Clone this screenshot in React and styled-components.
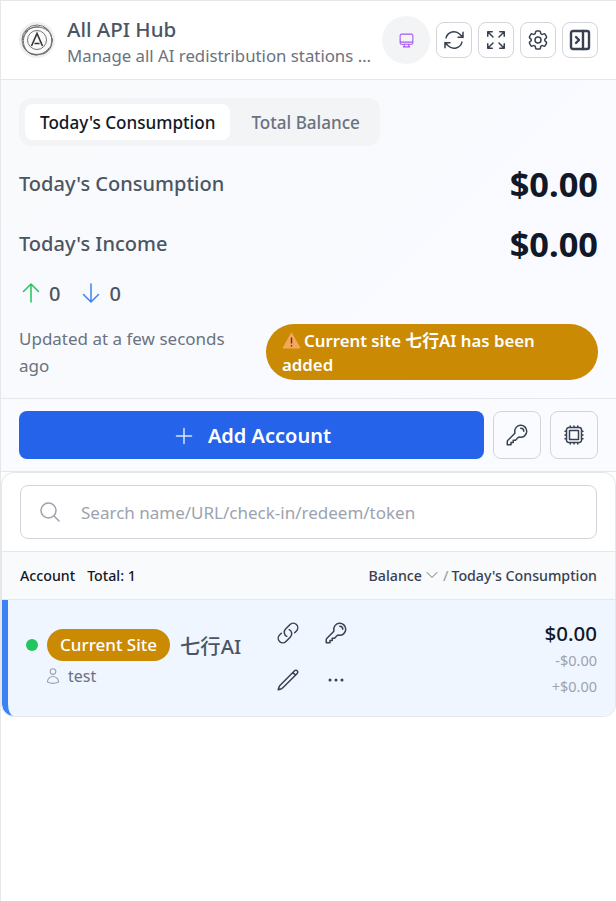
import React from 'react';
import styled, { createGlobalStyle } from 'styled-components';
import { PanelRightClose } from 'lucide-react';
import {
  HiOutlineArrowDown,
  HiOutlineArrowPath,
  HiOutlineArrowUp,
  HiOutlineArrowsPointingOut,
  HiOutlineChevronDown,
  HiOutlineCog6Tooth,
  HiOutlineComputerDesktop,
  HiOutlineCpuChip,
  HiOutlineEllipsisHorizontal,
  HiOutlineKey,
  HiOutlineLink,
  HiOutlineMagnifyingGlass,
  HiOutlinePencil,
  HiOutlinePlus,
  HiOutlineUser,
} from 'react-icons/hi2';

const GlobalStyle = createGlobalStyle`
  html, body { margin: 0; padding: 0; background: #fff; }
  body {
    font-family: "Noto Sans", "Noto Sans CJK SC", sans-serif;
    color: #374151;
  }
  * { box-sizing: border-box; }
`;

const Page = styled.div`
  position: relative;
  width: 616px;
  height: 901px;
  overflow: hidden;
  border-left: 1px solid #e5e7eb;
  border-top: 1px solid #e5e7eb;
  background: #fff;

  /* bits of the page behind the popup showing through the edge */
  &::before {
    content: "";
    position: absolute;
    left: -1px;
    top: 132px;
    width: 1px;
    height: 193px;
    background: #7b919b;
  }
  &::after {
    content: "";
    position: absolute;
    left: -1px;
    top: 767px;
    width: 1px;
    height: 19px;
    background: #9a9a9a;
  }
`;

const Header = styled.header`
  height: 79px;
  display: flex;
  align-items: center;
  padding: 0 18px;
  border-bottom: 1px solid #e5e7eb;
  background: #fff;
`;

const Logo = styled.svg`
  width: 36px;
  height: 36px;
  flex: none;
`;

const Brand = styled.div`
  margin-left: 12px;
  padding-top: 3px;
  width: 305px;
  flex: none;
  margin-right: 10px;
`;

const AppName = styled.div`
  font-size: 20.5px;
  line-height: 28px;
  font-weight: 500;
  color: #4b5563;
`;

const AppTag = styled.div`
  font-size: 16.8px;
  line-height: 26px;
  color: #6b7280;
  white-space: nowrap;
  overflow: hidden;
  text-overflow: ellipsis;
`;

const ThemeButton = styled.div`
  width: 48px;
  height: 48px;
  border-radius: 50%;
  background: #f3f4f6;
  color: #a855f7;
  display: flex;
  align-items: center;
  justify-content: center;
  flex: none;
  font-size: 17px;
`;

const HeaderTools = styled.div`
  display: flex;
  gap: 6px;
  margin-left: 6px;
`;

const ToolButton = styled.div`
  width: 36px;
  height: 36px;
  border: 1px solid #d1d5db;
  border-radius: 8px;
  background: #fff;
  color: #374151;
  display: flex;
  align-items: center;
  justify-content: center;
  font-size: 24px;
`;

const BalanceSection = styled.section`
  height: 319px;
  padding: 18px 18px 0;
  background: linear-gradient(135deg, #f8fafc 0%, #f8faff 60%, #fafbff 100%);
  border-bottom: 1px solid #e5e7eb;
`;

const Tabs = styled.div`
  display: inline-flex;
  width: 361px;
  height: 48px;
  padding: 6px;
  border-radius: 12px;
  background: #f3f4f6;
`;

const Tab = styled.div`
  height: 36px;
  padding: 1px ${p => (p.$active ? 15 : 21)}px 0;
  border-radius: 8px;
  display: flex;
  align-items: center;
  font-size: 17.1px;
  font-weight: 500;
  white-space: nowrap;
  background: ${p => (p.$active ? '#fff' : 'transparent')};
  color: ${p => (p.$active ? '#111827' : '#6b7280')};
`;

const StatRow = styled.div`
  display: flex;
  align-items: center;
  justify-content: space-between;
  height: 40px;
  margin-top: ${p => p.$top}px;
`;

const StatLabel = styled.div`
  font-size: 20px;
  font-weight: 500;
  color: #4b5563;
`;

const StatValue = styled.div`
  margin-top: 1px;
  font-size: 34.4px;
  font-weight: 700;
  color: #111827;
`;

const Flow = styled.div`
  display: flex;
  align-items: center;
  gap: 19px;
  margin-top: 16px;
  height: 28px;
`;

const FlowItem = styled.div`
  display: flex;
  align-items: center;
  gap: 6px;
  font-size: 20px;
  font-weight: 500;
  color: #4b5563;
  svg { font-size: 24px; color: ${p => p.$color}; }
`;

const StatusRow = styled.div`
  display: flex;
  align-items: center;
  justify-content: space-between;
  margin-top: 17px;
`;

const Updated = styled.div`
  width: 220px;
  font-size: 17px;
  line-height: 27px;
  color: #6b7280;
`;

const Notice = styled.div`
  width: 332px;
  height: 56px;
  padding: 5px 24px 0 16px;
  border-radius: 28px;
  background: #ca8a04;
  color: #fff;
  font-size: 16.8px;
  line-height: 24px;
  font-weight: 600;
`;

const WarnIcon = styled.svg`
  width: 19px;
  height: 17px;
  vertical-align: -2px;
  margin-right: 3px;
`;

const Actions = styled.div`
  height: 73px;
  display: flex;
  align-items: center;
  gap: 9px;
  padding: 0 18px;
  background: #fafbff;
  border-bottom: 1px solid #e5e7eb;
`;

const AddButton = styled.div`
  flex: 1;
  height: 48px;
  padding-top: 1px;
  border-radius: 8px;
  background: #2563eb;
  color: #fff;
  display: flex;
  align-items: center;
  justify-content: center;
  gap: 12px;
  font-size: 20px;
  font-weight: 600;
  svg { font-size: 24px; color: #dbe6fd; }
`;

const IconButton = styled.div`
  width: 48px;
  height: 48px;
  border: 1px solid #d1d5db;
  border-radius: 8px;
  color: #374151;
  display: flex;
  align-items: center;
  justify-content: center;
  font-size: 24px;
`;

const Card = styled.div`
  margin: 1px 0 0 1px;
  width: 613px;
  height: 243px;
  border-radius: 12px;
  background: #fff;
  box-shadow: 0 0 0 1px #e5e7eb;
  overflow: hidden;
`;

const SearchWrap = styled.div`
  height: 79px;
  padding: 12px 18px;
  border-bottom: 1px solid #e5e7eb;
`;

const SearchBox = styled.div`
  height: 54px;
  border: 1px solid #d1d5db;
  border-radius: 8px;
  display: flex;
  align-items: center;
  padding-left: 17px;
  gap: 19px;
  font-size: 17px;
  color: #9ca3af;
  svg { font-size: 24px; }
`;

const ListHead = styled.div`
  height: 48px;
  padding: 0 18px 1px;
  display: flex;
  align-items: center;
  justify-content: space-between;
  background: #f9fafb;
  border-bottom: 1px solid #e5e7eb;
  font-size: 14.2px;
  font-weight: 500;
  color: #111827;
`;

const HeadLeft = styled.div`
  display: flex;
  gap: 12px;
`;

const HeadRight = styled.div`
  display: flex;
  align-items: center;
  color: #374151;
  svg { font-size: 16px; margin: 0 3px 0 2px; color: #6b7280; }
`;

const Slash = styled.span`
  color: #9ca3af;
  margin-right: 3px;
`;

const AccountRow = styled.div`
  height: 116px;
  display: flex;
  align-items: center;
  border-left: 6px solid #3b82f6;
  border-radius: 0 0 12px 12px;
  background: #eff6ff;
  padding: 0 18px;
`;

const AccountMain = styled.div`
  width: 250px;
  flex: none;
`;

const SiteLine = styled.div`
  display: flex;
  align-items: center;
`;

const Dot = styled.span`
  width: 12px;
  height: 12px;
  border-radius: 50%;
  background: #22c55e;
  margin-right: 9px;
`;

const Badge = styled.span`
  height: 32px;
  padding: 0 13px 1px;
  border-radius: 16px;
  background: #ca8a04;
  color: #fff;
  font-size: 17px;
  font-weight: 500;
  display: flex;
  align-items: center;
`;

const SiteName = styled.span`
  margin-left: 10px;
  font-size: 20.3px;
  font-weight: 500;
  color: #4b5563;
`;

const UserLine = styled.div`
  display: flex;
  align-items: center;
  gap: 6px;
  margin: 4px 0 0 18px;
  font-size: 16px;
  color: #6b7280;
  svg { font-size: 18px; color: #9ca3af; }
`;

const RowIcons = styled.div`
  display: grid;
  grid-template-columns: 24px 24px;
  gap: 23px 24px;
  margin-top: -3px;
  font-size: 24px;
  color: #374151;
  svg { display: block; }
`;

const Amounts = styled.div`
  margin: 2px 0 0 auto;
  text-align: right;
`;

const Amount = styled.div`
  font-size: 20.5px;
  line-height: 28px;
  font-weight: 500;
  color: #111827;
`;

const SubAmount = styled.div`
  font-size: 14.5px;
  line-height: 26px;
  color: #9ca3af;
`;

function AppLogo() {
  return (
    <Logo viewBox="0 0 36 36">
      <circle cx="18" cy="18" r="18" fill="#efefed" />
      <circle cx="18" cy="18" r="15" fill="#fafafa" />
      <g fill="none" stroke="#666" strokeWidth="0.9">
        <circle cx="18" cy="18" r="15" />
        <circle cx="18" cy="18" r="9.500" />
        <path d="M6 10c6-6 16-7 23-1M3.500 18c1-8 8-14 17-13M8 29C3 23 3 14 9 9M18 33c-7 0-12-4-14-10M30 26c-4 6-12 8-19 5M33 16c1 8-3 14-9 16M24 4.500c5 3 9 8 9 15" />
      </g>
      <path d="M12.500 24 18 11.500 23.500 24M15.500 21.500h5" fill="none" stroke="#333" strokeWidth="1.600" />
    </Logo>
  );
}

export default function App() {
  return (
    <>
      <GlobalStyle />
      <Page>
        <Header>
          <AppLogo />
          <Brand>
            <AppName>All API Hub</AppName>
            <AppTag>Manage all AI redistribution stations and accounts</AppTag>
          </Brand>
          <ThemeButton><HiOutlineComputerDesktop /></ThemeButton>
          <HeaderTools>
            <ToolButton><HiOutlineArrowPath /></ToolButton>
            <ToolButton><HiOutlineArrowsPointingOut /></ToolButton>
            <ToolButton><HiOutlineCog6Tooth /></ToolButton>
            <ToolButton><PanelRightClose size={24} strokeWidth={2.4} /></ToolButton>
          </HeaderTools>
        </Header>

        <BalanceSection>
          <Tabs>
            <Tab $active>Today's Consumption</Tab>
            <Tab>Total Balance</Tab>
          </Tabs>
          <StatRow $top={17}>
            <StatLabel>Today's Consumption</StatLabel>
            <StatValue>$0.00</StatValue>
          </StatRow>
          <StatRow $top={20}>
            <StatLabel>Today's Income</StatLabel>
            <StatValue>$0.00</StatValue>
          </StatRow>
          <Flow>
            <FlowItem $color="#22c55e"><HiOutlineArrowUp />0</FlowItem>
            <FlowItem $color="#3b82f6"><HiOutlineArrowDown />0</FlowItem>
          </Flow>
          <StatusRow>
            <Updated>Updated at a few seconds ago</Updated>
            <Notice>
              <WarnIcon viewBox="0 0 19 17">
                <path d="M9.500 1 18 16H1z" fill="#f5a65b" stroke="#f5a65b" strokeLinejoin="round" />
                <path d="M9.500 5.500v6M9.500 13v1.500" stroke="#4b3a2a" strokeWidth="1.400" />
              </WarnIcon>
              Current site 七行AI has been added
            </Notice>
          </StatusRow>
        </BalanceSection>

        <Actions>
          <AddButton><HiOutlinePlus />Add Account</AddButton>
          <IconButton><HiOutlineKey /></IconButton>
          <IconButton><HiOutlineCpuChip /></IconButton>
        </Actions>

        <Card>
          <SearchWrap>
            <SearchBox>
              <HiOutlineMagnifyingGlass />
              Search name/URL/check-in/redeem/token
            </SearchBox>
          </SearchWrap>
          <ListHead>
            <HeadLeft><span>Account</span><span>Total: 1</span></HeadLeft>
            <HeadRight>
              Balance<HiOutlineChevronDown /><Slash>/</Slash>Today's Consumption
            </HeadRight>
          </ListHead>
          <AccountRow>
            <AccountMain>
              <SiteLine>
                <Dot />
                <Badge>Current Site</Badge>
                <SiteName>七行AI</SiteName>
              </SiteLine>
              <UserLine><HiOutlineUser />test</UserLine>
            </AccountMain>
            <RowIcons>
              <HiOutlineLink />
              <HiOutlineKey />
              <HiOutlinePencil />
              <HiOutlineEllipsisHorizontal />
            </RowIcons>
            <Amounts>
              <Amount>$0.00</Amount>
              <SubAmount>-$0.00</SubAmount>
              <SubAmount>+$0.00</SubAmount>
            </Amounts>
          </AccountRow>
        </Card>
      </Page>
    </>
  );
}
